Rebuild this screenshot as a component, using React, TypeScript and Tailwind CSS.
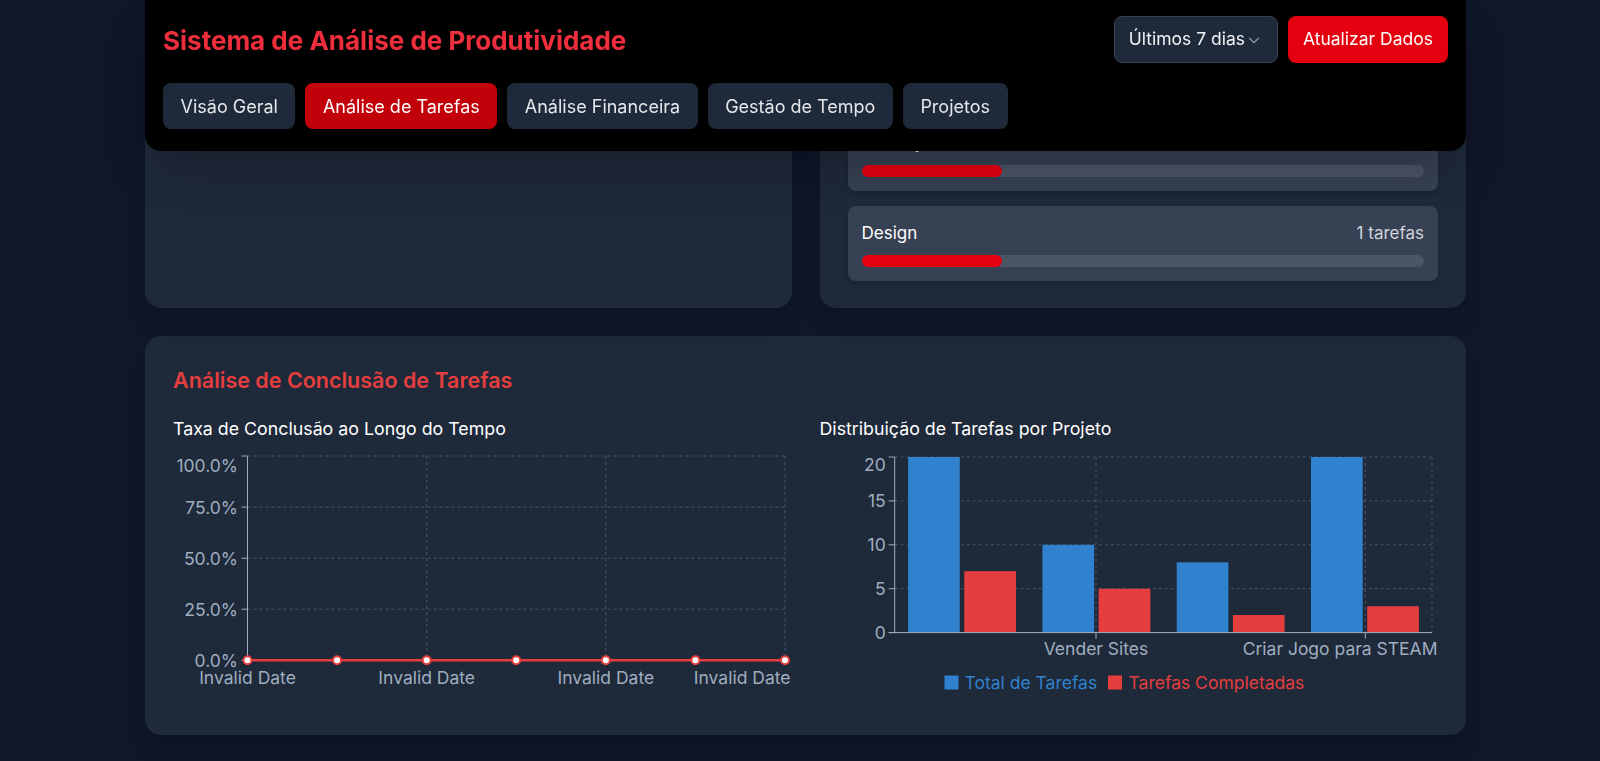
import React from "react";

const font = { fontFamily: "Inter, 'Noto Sans', sans-serif" };

const tabs = ["Visão Geral", "Análise de Tarefas", "Análise Financeira", "Gestão de Tempo", "Projetos"];

const categories = [
  { name: "Programação", count: 1 },
  { name: "Educação", count: 1 },
  { name: "Design", count: 1 },
];

const bars = [
  { name: "Estudos", total: 20, done: 7 },
  { name: "Vender Sites", total: 10, done: 5 },
  { name: "Marketing", total: 8, done: 2 },
  { name: "Criar Jogo para STEAM", total: 20, done: 3 },
];

function Header() {
  return (
    <div className="fixed inset-x-0 top-0 z-10">
      <header className="ml-[145px] mr-[134px] rounded-b-2xl bg-black px-[18px] pt-4 pb-[22px] shadow-2xl">
        <div className="flex h-[47px] items-center justify-between">
          <h1 className="pt-[1px] text-[26px] font-bold text-[#ee2e3c]">Sistema de Análise de Produtividade</h1>
          <div className="flex gap-[10px]">
            <button className="flex h-[47px] items-center gap-[1px] rounded-lg border border-gray-700 bg-gray-800 pl-[14px] pr-[15px] text-[17.5px] text-gray-100">
              Últimos 7 dias
              <svg width="16" height="16" viewBox="0 0 24 24" fill="none" stroke="#9ca3af" strokeWidth="1.6">
                <path d="M5 9l7 7 7-7" />
              </svg>
            </button>
            <button className="h-[47px] rounded-lg bg-[#e5000f] px-[15px] text-[17.5px] text-white">Atualizar Dados</button>
          </div>
        </div>
        <nav className="mt-5 flex gap-[10px]">
          {tabs.map((t) => (
            <button
              key={t}
              className={
                t === "Análise de Tarefas"
                  ? "h-[46px] rounded-lg bg-[#c1000a] px-[17.5px] text-[18px] text-white"
                  : "h-[46px] rounded-lg bg-gray-800 px-[17.5px] text-[18px] text-gray-200"
              }
            >
              {t}
            </button>
          ))}
        </nav>
      </header>
    </div>
  );
}

const lbl = 17.5;

function LineChart() {
  const ys = [9, 60.1, 111.2, 162.2, 213.3];
  const labels = ["100.0%", "75.0%", "50.0%", "25.0%", "0.0%"];
  const xs = Array.from({ length: 7 }, (_, i) => 74.5 + i * 89.58);
  return (
    <svg width="100%" height="260" style={font}>
      {ys.map((y) => (
        <line key={y} x1={74.5} x2={612} y1={y} y2={y} stroke="#4a5568" strokeDasharray="3 3" />
      ))}
      {[74.5, 253.7, 432.8, 612].map((x) => (
        <line key={x} x1={x} x2={x} y1={9} y2={213.3} stroke="#4a5568" strokeDasharray="3 3" />
      ))}
      <line x1={74.5} x2={74.5} y1={9} y2={213.3} stroke="#a0aec0" />
      <line x1={74.5} x2={612} y1={213.3} y2={213.3} stroke="#a0aec0" />
      {ys.map((y, i) => (
        <g key={i}>
          <line x1={68.5} x2={74.5} y1={y} y2={y} stroke="#a0aec0" />
          <text x={65} y={i === 0 ? 18.3 : y} textAnchor="end" dominantBaseline="central" fill="#a0aec0" fontSize={lbl}>
            {labels[i]}
          </text>
        </g>
      ))}
      <polyline points={xs.map((x) => `${x},213.3`).join(" ")} fill="none" stroke="#e53e3e" strokeWidth="2.5" />
      {xs.map((x) => (
        <circle key={x} cx={x} cy={213.3} r="4" fill="#fff" stroke="#e53e3e" strokeWidth="2" />
      ))}
      {[74.5, 253.7, 432.8].map((x) => (
        <text key={x} x={x} y={230.3} textAnchor="middle" dominantBaseline="central" fill="#a0aec0" fontSize={lbl}>
          Invalid Date
        </text>
      ))}
      <text x={617.5} y={230.3} textAnchor="end" dominantBaseline="central" fill="#a0aec0" fontSize={lbl}>
        Invalid Date
      </text>
    </svg>
  );
}

function BarChart() {
  const top = 10;
  const bottom = 185.6;
  const unit = (bottom - top) / 20;
  const ys = [0, 5, 10, 15, 20];
  return (
    <svg width="100%" height="260" style={font}>
      {ys.map((v) => (
        <line key={v} x1={74.7} x2={612} y1={bottom - v * unit} y2={bottom - v * unit} stroke="#4a5568" strokeDasharray="3 3" />
      ))}
      {[276, 545.3, 612].map((x) => (
        <line key={x} x1={x} x2={x} y1={top} y2={bottom} stroke="#4a5568" strokeDasharray="3 3" />
      ))}
      {bars.map((b, i) => {
        const c = 74.7 + i * 134.3;
        return (
          <g key={b.name}>
            <rect x={c + 13.4} y={bottom - b.total * unit} width={51.7} height={b.total * unit} fill="#3182ce" />
            <rect x={c + 69.6} y={bottom - b.done * unit} width={51.7} height={b.done * unit} fill="#e53e3e" />
          </g>
        );
      })}
      <line x1={74.7} x2={74.7} y1={top} y2={bottom} stroke="#a0aec0" />
      <line x1={68.7} x2={612} y1={bottom} y2={bottom} stroke="#a0aec0" />
      {ys.map((v) => (
        <g key={v}>
          <line x1={68.7} x2={74.7} y1={bottom - v * unit} y2={bottom - v * unit} stroke="#a0aec0" />
          <text
            x={65.7}
            y={v === 20 ? 17.3 : bottom - v * unit}
            textAnchor="end"
            dominantBaseline="central"
            fill="#a0aec0"
            fontSize={lbl}
          >
            {v}
          </text>
        </g>
      ))}
      {[276, 545.3].map((x) => (
        <line key={x} x1={x} x2={x} y1={bottom} y2={bottom + 6} stroke="#a0aec0" />
      ))}
      <text x={276} y={201.6} textAnchor="middle" dominantBaseline="central" fill="#a0aec0" fontSize={lbl}>
        Vender Sites
      </text>
      <text x={617.5} y={201.6} textAnchor="end" dominantBaseline="central" fill="#a0aec0" fontSize={lbl}>
        Criar Jogo para STEAM
      </text>
      <rect x={124.5} y={228.5} width={14} height={14} fill="#3182ce" />
      <text x={144.5} y={235} dominantBaseline="central" fill="#3182ce" fontSize={lbl}>
        Total de Tarefas
      </text>
      <rect x={288} y={228.5} width={14} height={14} fill="#e53e3e" />
      <text x={308.6} y={235} dominantBaseline="central" fill="#e53e3e" fontSize={lbl}>
        Tarefas Completadas
      </text>
    </svg>
  );
}

export default function App() {
  return (
    <div className="h-[761px] overflow-hidden bg-[#10172a]" style={font}>
      <Header />
      <main className="-mt-[2px] pl-[145px] pr-[134px]">
        <div className="grid grid-cols-2 gap-7">
          <div className="rounded-2xl bg-gray-800 p-7 shadow-xl" />
          <div className="rounded-2xl bg-gray-800 px-7 pt-7 pb-[27px] shadow-xl">
            <div className="flex flex-col gap-[15px]">
              {categories.map((c) => (
                <div key={c.name} className="rounded-lg bg-gray-700 p-[14px] shadow-md">
                  <div className="mb-2 flex items-center justify-between text-[17px] leading-[27px]">
                    <span className="text-white">{c.name}</span>
                    <span className="text-gray-300">{c.count} tarefas</span>
                  </div>
                  <div className="h-3 rounded-full bg-gray-600">
                    <div className="h-3 w-1/4 rounded-full bg-[#e3000f]" />
                  </div>
                </div>
              ))}
            </div>
          </div>
        </div>

        <section className="mt-7 rounded-2xl bg-gray-800 p-7 shadow-xl">
          <h2 className="mb-5 text-[21.5px] leading-[33px] font-semibold text-[#e53e3e]">Análise de Conclusão de Tarefas</h2>
          <div className="grid grid-cols-2 gap-7">
            <div>
              <h3 className="mb-[6px] text-[17.8px] leading-6 text-white">Taxa de Conclusão ao Longo do Tempo</h3>
              <LineChart />
            </div>
            <div>
              <h3 className="mb-[6px] text-[17.8px] leading-6 text-white">Distribuição de Tarefas por Projeto</h3>
              <BarChart />
            </div>
          </div>
        </section>
      </main>
    </div>
  );
}
